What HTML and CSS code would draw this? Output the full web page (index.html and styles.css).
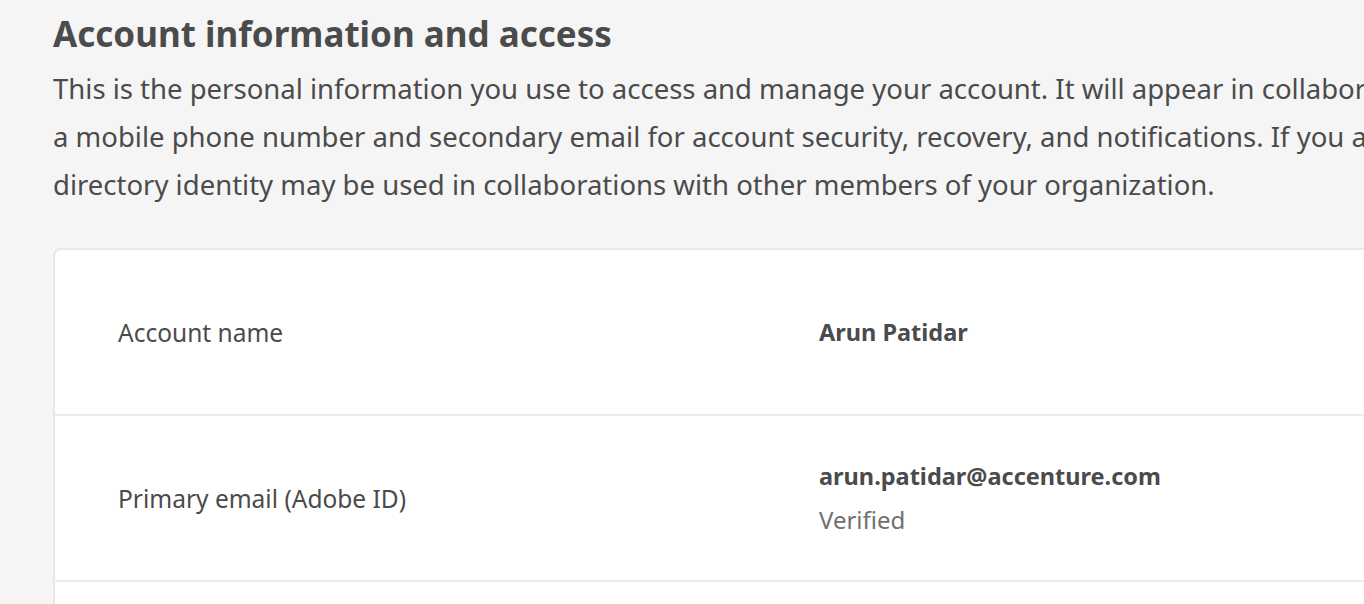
FILE: index.html
```html
<!DOCTYPE html>
<html>
<head>
<meta charset="utf-8">
<link rel="stylesheet" href="styles.css">
</head>
<body>
<main class="page">
  <h1 class="title">Account information and access</h1>
  <p class="intro">
    <span class="line">This is the personal information you use to access and manage your account. It will appear in collaborations with people outside your organization. We recommend adding</span>
    <span class="line">a mobile phone number and secondary email for account security, recovery, and notifications. If you are a member of an organization, your</span>
    <span class="line">directory identity may be used in collaborations with other members of your organization.</span>
  </p>
  <section class="card">
    <div class="row">
      <div class="label">Account name</div>
      <div class="value"><div class="strong">Arun Patidar</div></div>
    </div>
    <div class="row">
      <div class="label">Primary email (Adobe ID)</div>
      <div class="value">
        <div class="strong">arun.patidar@accenture.com</div>
        <div class="muted">Verified</div>
      </div>
    </div>
    <div class="row row-empty"></div>
  </section>
</main>
</body>
</html>
```

FILE: styles.css
```css
html, body {
  margin: 0;
  padding: 0;
  background: #f5f5f5;
  overflow: hidden;
  height: 604px;
}
body {
  font-family: "Noto Sans", "Open Sans", sans-serif;
  color: #4b4b4b;
}
.page {
  padding: 10px 0 0 53px;
  width: 1500px;
}
.title {
  margin: 0;
  font-size: 35px;
  line-height: 48px;
  font-weight: 700;
  color: #4b4b4b;
}
.intro {
  margin: 7px 0 0 0;
  font-size: 27.5px;
  line-height: 48px;
}
.line {
  display: block;
  white-space: nowrap;
}
.card {
  margin-top: 39px;
  background: #fff;
  border: 2px solid #e8e8e8;
  border-radius: 8px;
  width: 1400px;
}
.row {
  display: grid;
  grid-template-columns: 701px 1fr;
  align-items: center;
  height: 164px;
  padding-left: 63px;
  border-bottom: 2px solid #ebebeb;
}
.row-empty {
  height: 40px;
  border-bottom: none;
}
.label {
  font-size: 24.5px;
}
.strong {
  font-size: 23.5px;
  font-weight: 700;
  line-height: 43px;
}
.muted {
  font-size: 24px;
  line-height: 43px;
  color: #707070;
}
```
